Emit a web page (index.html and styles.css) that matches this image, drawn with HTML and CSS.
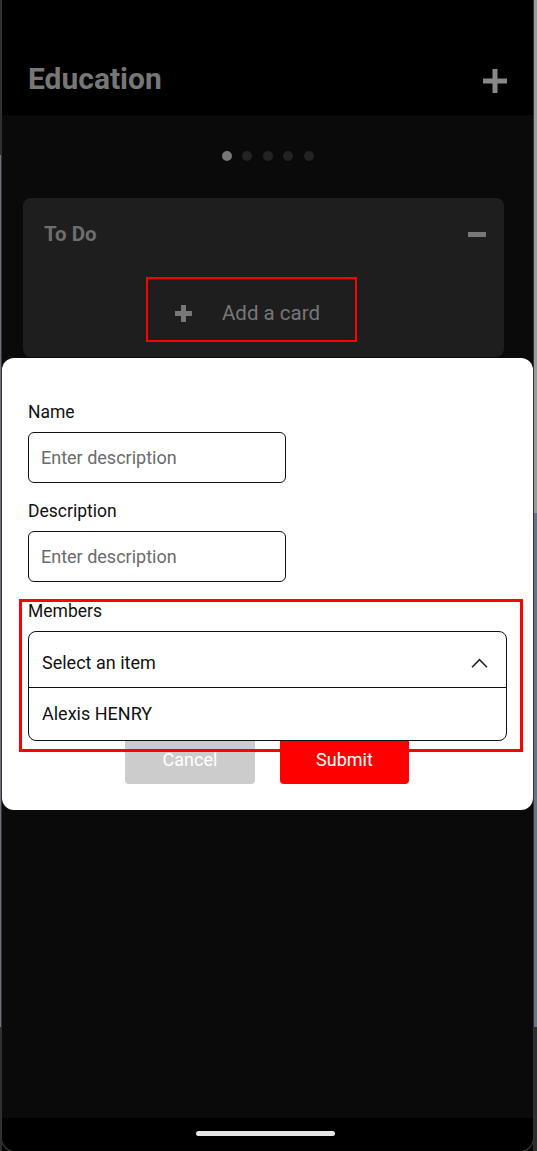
FILE: index.html
```html
<!DOCTYPE html>
<html>
<head>
<meta charset="utf-8">
<link rel="stylesheet" href="styles.css">
</head>
<body>
<div class="device">
  <div class="screen">
    <header class="topbar">
      <h1 class="title">Education</h1>
      <svg class="icon-plus" width="24" height="24" viewBox="0 0 24 24"><path d="M12 0v24M0 12h24" stroke="#888" stroke-width="5" fill="none"/></svg>
    </header>
    <main class="main">
      <div class="dots">
        <span class="dot active"></span><span class="dot"></span><span class="dot"></span><span class="dot"></span><span class="dot"></span>
      </div>
      <section class="list-card">
        <div class="list-head">
          <span class="list-title">To Do</span>
          <svg width="18" height="5" viewBox="0 0 18 5"><rect width="18" height="5" fill="#777"/></svg>
        </div>
        <button class="add-card">
          <svg width="17" height="17" viewBox="0 0 17 17"><path d="M8.5 0v17M0 8.5h17" stroke="#777" stroke-width="5" fill="none"/></svg>
          <span>Add a card</span>
        </button>
      </section>

      <div class="modal">
        <label class="label">Name</label>
        <div class="input">Enter description</div>
        <label class="label gap">Description</label>
        <div class="input">Enter description</div>
        <div class="members">
          <label class="label">Members</label>
          <div class="select-wrap">
            <div class="select-box">
              <div class="select-head">
                <span>Select an item</span>
                <svg width="17" height="10" viewBox="0 0 17 10"><path d="M1 9.2L8.5 1.7L16 9.2" stroke="#222" stroke-width="1.6" fill="none"/></svg>
              </div>
              <div class="option">Alexis HENRY</div>
            </div>
          </div>
        </div>
        <div class="actions">
          <button class="btn cancel">Cancel</button>
          <button class="btn submit">Submit</button>
        </div>
      </div>
    </main>
    <footer class="navbar"><span class="home"></span></footer>
  </div>
</div>
</body>
</html>
```

FILE: styles.css
```css
* { box-sizing: border-box; }
html, body { margin: 0; padding: 0; background: #000; }
body { font-family: Roboto, "Liberation Sans", sans-serif; }

.device {
  width: 537px;
  height: 1151px;
  overflow: hidden;
  background:
    linear-gradient(to bottom, #2e2e2e 0 155px, #6b7280 155px 1027px, #2e2e2e 1027px) left top / 2px 100% no-repeat,
    linear-gradient(to bottom, #9a9a9a 0 513px, #6b7280 513px 1027px, #2e2e2e 1027px) right top / 4px 100% no-repeat,
    #000;
}

.screen {
  margin-left: 2px;
  width: 531px;
  height: 1151px;
  display: flex;
  flex-direction: column;
  border-radius: 0 0 14px 14px;
  overflow: hidden;
  box-shadow: 0 1px 0 1px #333;
}

.topbar {
  height: 115px;
  flex: none;
  background: #000;
  display: flex;
  justify-content: space-between;
  align-items: center;
  padding: 43px 26px 0 26px;
}
.title {
  margin: 0;
  font-size: 30px;
  font-weight: 700;
  color: #777;
  line-height: 34px;
}
.icon-plus { margin-top: 4px; }

.main {
  flex: 1;
  background: #0a0a0a;
  position: relative;
  padding-top: 36px;
}

.dots {
  display: flex;
  justify-content: center;
  gap: 10.5px;
}
.dot {
  width: 10px;
  height: 10px;
  border-radius: 50%;
  background: #232323;
}
.dot.active { background: #777; }

.list-card {
  margin: 37px 0 0 21px;
  width: 481px;
  height: 159px;
  background: #1e1e1e;
  border-radius: 8px;
  padding: 24px 18px 0 21px;
}
.list-head {
  display: flex;
  justify-content: space-between;
  align-items: center;
  height: 24px;
}
.list-title {
  font-size: 20.5px;
  font-weight: 700;
  color: #6e6e6e;
}
.add-card {
  margin: 31px 0 0 102px;
  width: 211px;
  height: 65px;
  border: 2.5px solid #ff0000;
  background: transparent;
  display: flex;
  align-items: center;
  gap: 30px;
  padding: 7px 0 0 27px;
  font-family: inherit;
  font-size: 20.5px;
  color: #777;
}

.modal {
  position: absolute;
  top: 243px;
  left: 0;
  right: 0;
  background: #fff;
  border-radius: 12px;
  padding: 45px 26px 26px 26px;
  display: flex;
  flex-direction: column;
  align-items: flex-start;
}
.label {
  display: block;
  font-size: 17.5px;
  line-height: 19px;
  color: #111;
  margin-bottom: 10px;
}
.label.gap { margin-top: 19px; }
.input {
  width: 258px;
  height: 51px;
  border: 1px solid #111;
  border-radius: 6px;
  padding-left: 12px;
  display: flex;
  align-items: center;
  font-size: 18px;
  color: #6b6b6b;
}

.members {
  position: relative;
  margin-top: 20px;
  width: 479px;
}
.members::after {
  content: "";
  position: absolute;
  top: -3px;
  left: -9px;
  right: -16px;
  bottom: -65px;
  border: 3px solid #ff0000;
  pointer-events: none;
}
.select-wrap {
  position: relative;
  height: 56px;
}
.select-box {
  position: absolute;
  top: 0;
  left: 0;
  right: 0;
  background: #fff;
  border: 1px solid #111;
  border-radius: 8px;
  z-index: 1;
}
.select-head {
  height: 56px;
  display: flex;
  align-items: center;
  justify-content: space-between;
  padding: 6px 18px 0 13px;
  border-bottom: 1px solid #111;
  font-size: 18px;
  color: #111;
}
.option {
  height: 52px;
  display: flex;
  align-items: center;
  padding: 0 13px 2px;
  font-size: 18px;
  color: #111;
}

.actions {
  align-self: stretch;
  display: flex;
  justify-content: center;
  gap: 25px;
  margin-top: 48px;
  padding-right: 1px;
}
.btn {
  width: 130px;
  height: 49px;
  border: 0;
  border-radius: 4px;
  font-family: inherit;
  font-size: 18px;
  color: #fff;
}
.cancel { background: #cccccc; }
.submit { background: #ff0000; width: 129px; }

.navbar {
  height: 33px;
  flex: none;
  background: #000;
  display: flex;
  justify-content: center;
  padding-top: 13px;
}
.home {
  width: 139px;
  height: 5px;
  border-radius: 3px;
  background: #e6e6e6;
  margin-right: 4px;
}
```
